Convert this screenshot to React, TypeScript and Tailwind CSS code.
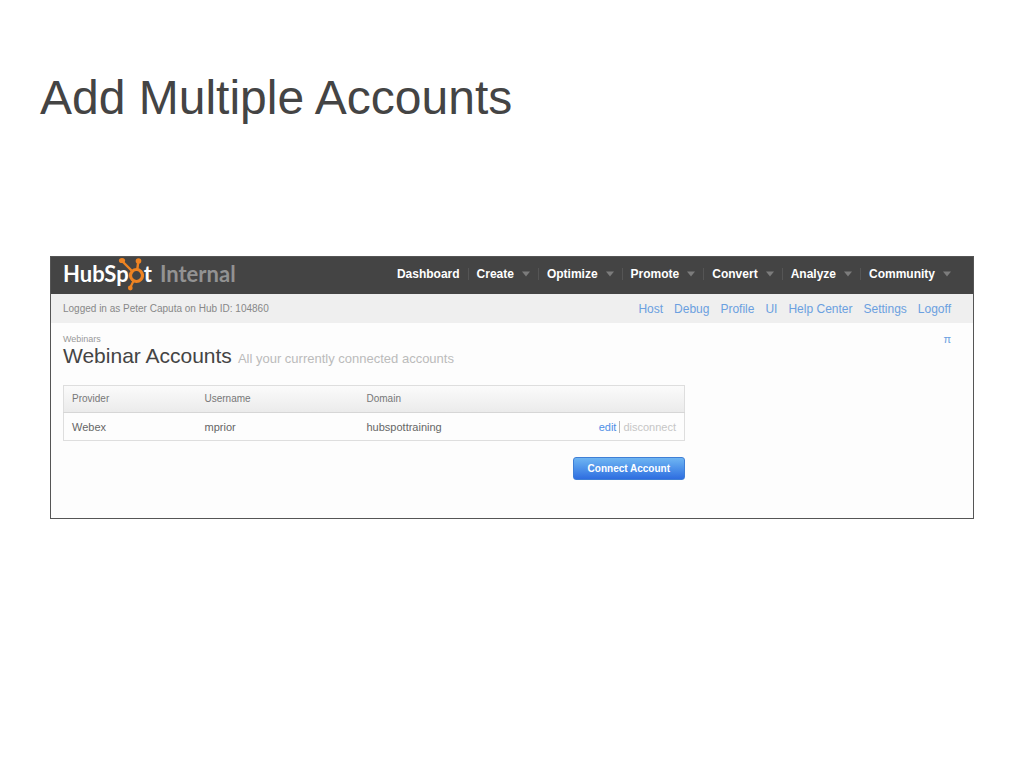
import React from 'react';

interface NavItem {
  label: string;
  hasMenu: boolean;
}

interface WebinarAccount {
  provider: string;
  username: string;
  domain: string;
}

const navItems: NavItem[] = [
  { label: 'Dashboard', hasMenu: false },
  { label: 'Create', hasMenu: true },
  { label: 'Optimize', hasMenu: true },
  { label: 'Promote', hasMenu: true },
  { label: 'Convert', hasMenu: true },
  { label: 'Analyze', hasMenu: true },
  { label: 'Community', hasMenu: true },
];

const userLinks = ['Host', 'Debug', 'Profile', 'UI', 'Help Center', 'Settings', 'Logoff'];

const accounts: WebinarAccount[] = [
  { provider: 'Webex', username: 'mprior', domain: 'hubspottraining' },
];

const Sprocket: React.FC = () => (
  <svg width="26" height="34" viewBox="0 0 26 34" fill="none" stroke="#ee8322" aria-hidden="true" className="-ml-[11px] shrink-0">
    <circle cx="18.5" cy="18.5" r="6" strokeWidth="3.2" />
    <path d="M4 4 L13.5 13.5" strokeWidth="2.4" />
    <path d="M20.3 4.5 L19.3 12.5" strokeWidth="2.4" />
    <path d="M15.5 24 L12.5 30" strokeWidth="2.2" />
    <ellipse cx="4" cy="3.5" rx="3.1" ry="2.6" fill="#ee8322" stroke="none" />
    <circle cx="20.5" cy="4" r="2.8" fill="#ee8322" stroke="none" />
    <circle cx="12.3" cy="31" r="2.4" fill="#ee8322" stroke="none" />
  </svg>
);

const Logo: React.FC = () => (
  <a href="#" className="flex h-[34px] items-center font-['Lato',sans-serif] text-[22px] leading-8 font-bold text-white">
    <span>HubSp</span>
    <Sprocket />
    <span>t</span>
    <span className="ml-2 text-[#929292]">Internal</span>
  </a>
);

const MainNav: React.FC = () => (
  <nav aria-label="Main">
    <ul className="flex items-center">
      {navItems.map((item) => (
        <li key={item.label} className="border-r border-[#555555] px-2 last:border-r-0 last:pr-0">
          <a href="#" className="flex items-center gap-2 text-xs leading-3 font-bold text-white">
            {item.label}
            {item.hasMenu && (
              <svg width="8" height="6" viewBox="0 0 8 6" aria-hidden="true">
                <path d="M0 0.5 H8 L4 5.5 Z" fill="#7c7c7c" />
              </svg>
            )}
          </a>
        </li>
      ))}
    </ul>
  </nav>
);

const AccountsTable: React.FC = () => (
  <table className="w-full table-fixed border border-[#dedede] text-left text-[11px] leading-3 text-[#666666]">
    <thead>
      <tr className="h-[27px] border-b border-[#d6d6d6] bg-linear-to-b from-[#fbfbfb] to-[#ebebeb] text-[10px] text-[#777777]">
        <th scope="col" className="w-[133px] px-2 font-normal">Provider</th>
        <th scope="col" className="w-[162px] px-2 font-normal">Username</th>
        <th scope="col" className="px-2 font-normal">Domain</th>
        <td className="px-2" />
      </tr>
    </thead>
    <tbody>
      {accounts.map((account) => (
        <tr key={account.username} className="h-7">
          <td className="px-2">{account.provider}</td>
          <td className="px-2">{account.username}</td>
          <td className="px-2">{account.domain}</td>
          <td className="px-2">
            <div className="flex items-center justify-end gap-[3px]">
              <a href="#" className="text-[#4f8fe6]">edit</a>
              <span className="h-3 w-px bg-[#b5b5b5]" />
              <a href="#" className="text-[#c6c6c6]">disconnect</a>
            </div>
          </td>
        </tr>
      ))}
    </tbody>
  </table>
);

const App: React.FC = () => {
  return (
    <main className="min-h-screen bg-white font-['Liberation_Sans',Arial,sans-serif]">
      <h1 className="px-10 pt-[70px] text-5xl leading-[56px] text-[#444444]">Add Multiple Accounts</h1>

      <section className="mx-[50px] mt-[130px] border border-[#555555] bg-[#fdfdfd]">
        <header className="flex h-[37px] items-center justify-between bg-[#444444] pr-[22px] pb-1 pl-3">
          <Logo />
          <MainNav />
        </header>

        <div className="flex h-[29px] items-center justify-between bg-[#efefef] pr-[22px] pl-3">
          <p className="text-[10px] leading-3 text-[#888888]">Logged in as Peter Caputa on Hub ID: 104860</p>
          <ul className="flex gap-[11px] text-xs leading-4 text-[#6ba0e0]">
            {userLinks.map((link) => (
              <li key={link}>
                <a href="#">{link}</a>
              </li>
            ))}
          </ul>
        </div>

        <div className="pt-[10px] pr-[22px] pb-[38px] pl-3">
          <div className="flex justify-between">
            <div>
              <p className="text-[9px] leading-3 text-[#999999]">Webinars</p>
              <div className="flex items-baseline gap-[6px]">
                <h2 className="text-[21px] leading-[22px] text-[#444444]">Webinar Accounts</h2>
                <p className="text-[13px] leading-4 text-[#bbbbbb]">All your currently connected accounts</p>
              </div>
            </div>
            <a href="#" className="text-[11px] leading-3 text-[#6ba0e0]">π</a>
          </div>

          <div className="mt-[18px] max-w-[622px]">
            <AccountsTable />
            <div className="mt-4 flex justify-end">
              <button
                type="button"
                className="h-[23px] rounded-[3px] border border-[#3f7fd6] bg-linear-to-b from-[#6fb5f2] to-[#2f6de0] px-[14px] text-[10px] leading-3 font-bold text-white"
              >
                Connect Account
              </button>
            </div>
          </div>
        </div>
      </section>
    </main>
  );
};

export default App;
